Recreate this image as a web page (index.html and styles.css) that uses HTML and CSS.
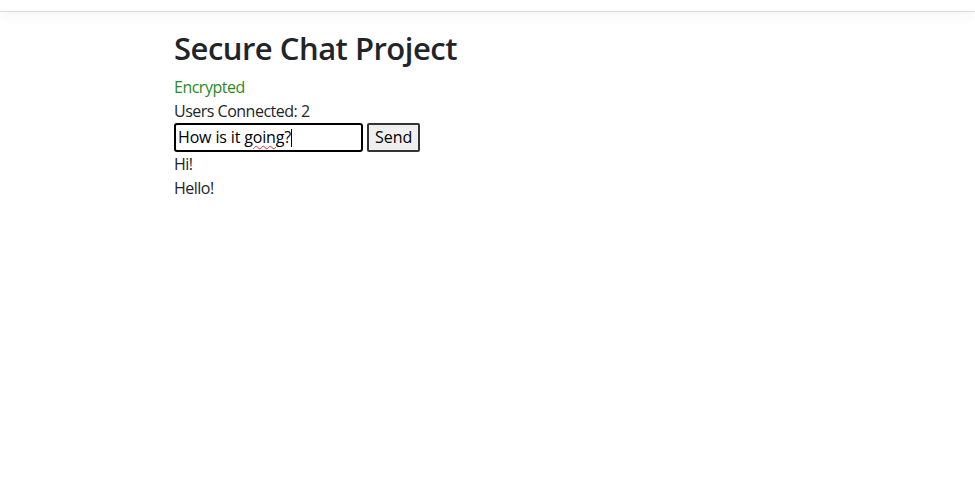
FILE: index.html
```html
<!DOCTYPE html>
<html lang="en">
<head>
<meta charset="utf-8">
<title>Secure Chat Project</title>
<link rel="stylesheet" href="styles.css">
</head>
<body>
<div class="topbar"></div>
<main class="container">
  <h1 class="title">Secure Chat Project</h1>
  <div class="status">Encrypted</div>
  <div class="line">Users Connected: 2</div>
  <form class="composer">
    <div class="field" role="textbox">How is it <span class="typo">going</span>?<span class="caret"></span></div>
    <button type="button" class="send">Send</button>
  </form>
  <div class="line">Hi!</div>
  <div class="line">Hello!</div>
</main>
</body>
</html>
```
FILE: styles.css
```css
* { box-sizing: border-box; }
html, body { margin: 0; padding: 0; background: #fff; }
body {
  font-family: "Open Sans", "Noto Sans", sans-serif;
  font-size: 16px;
  line-height: 1.5;
  color: #212529;
  letter-spacing: -0.5px;
}
.topbar {
  height: 12px;
  background: #fff;
  border-bottom: 1px solid #dcdcdc;
  box-shadow: 0 2px 14px rgba(0,0,0,0.06);
}
.container {
  padding: 17px 0 0 174px;
}
.title {
  margin: 0 0 8px;
  font-size: 31px;
  font-weight: 600;
  line-height: 1.24;
  letter-spacing: -0.5px;
}
.status { color: #2a8a1f; }
.composer {
  display: flex;
  gap: 4px;
  margin: 0;
}
.field {
  width: 189px;
  height: 29px;
  border: 2px solid #000;
  border-radius: 3px;
  padding: 0 2px;
  line-height: 25px;
  white-space: nowrap;
  color: #000;
  letter-spacing: -0.15px;
}
.typo {
  text-decoration: underline wavy #d32f2f;
  text-decoration-thickness: 1px;
  text-underline-offset: 2px;
}
.caret {
  display: inline-block;
  width: 1px;
  height: 18px;
  background: #000;
  vertical-align: -4px;
}
.send {
  height: 29px;
  padding: 0 6px;
  font: inherit;
  letter-spacing: 0;
  line-height: 25px;
  color: #000;
  background: #efefef;
  border: 2px solid #333;
  border-radius: 2px;
}
```
